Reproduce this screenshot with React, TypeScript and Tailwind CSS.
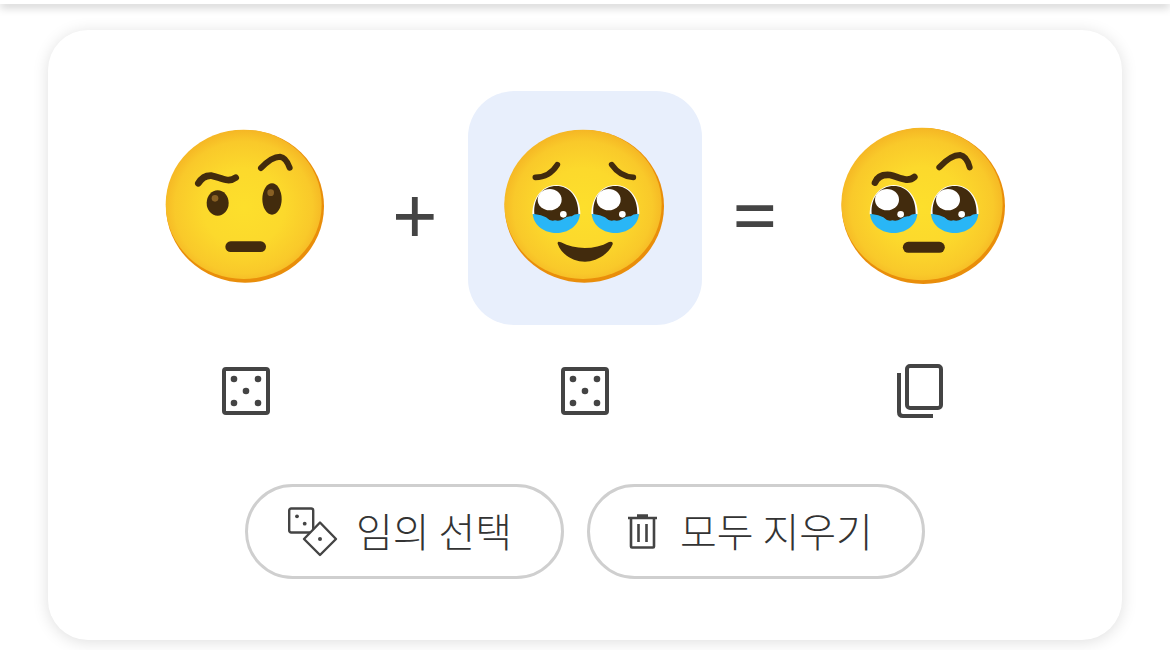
const INK = "#422b0d";

// Cells share one grid so the icon row lines up under the emoji row
function Face({ id, cx, cy, rx, ry, children }: { id: string; cx: number; cy: number; rx: number; ry: number; children: React.ReactNode }) {
  return (
    <svg viewBox="-36 -27 702 702" className="h-[234px] w-[234px]">
      <defs>
        <radialGradient id={id} cx="50%" cy="52%" r="52%">
          <stop offset="0" stopColor="#fddf2c" />
          <stop offset="0.5" stopColor="#fcd92c" />
          <stop offset="0.85" stopColor="#f9c92a" />
          <stop offset="1" stopColor="#f5b624" />
        </radialGradient>
      </defs>
      <ellipse cx={cx} cy={cy} rx={rx} ry={ry} fill="#e98e0a" />
      <ellipse cx={cx - 4} cy={cy - 6} rx={rx - 3} ry={ry - 5} fill={`url(#${id})`} />
      {children}
    </svg>
  );
}

function TearEye({ dx }: { dx: number }) {
  return (
    <g transform={`translate(${dx} 0)`}>
      <path d="M157 343C157 290 190 255 229 255C268 255 301 290 301 343Z" fill="#fff" />
      <path d="M158 342H300C296 380 262 399 229 399C196 399 162 380 158 342Z" fill="#29b6f6" />
      <path
        d="M163 342C160 290 190 258 229 258C268 258 296 290 295 342Q285 341 275 349Q262 347 250 357Q238 365 225 361Q210 365 198 352Q185 345 163 342Z"
        fill={INK}
      />
      <ellipse cx="209" cy="299" rx="36" ry="32" fill="#fff" />
      <circle cx="250" cy="343" r="10" fill="#fff" />
    </g>
  );
}

function RaisedBrowFace() {
  return (
    <Face id="face-a" cx={315} cy={319} rx={237} ry={229}>
      <path d="M175 250Q190 225 215 227C240 232 265 250 287 233" fill="none" stroke={INK} strokeWidth="20" strokeLinecap="round" />
      <path d="M363 204Q395 170 420 170Q438 172 449 203" fill="none" stroke={INK} strokeWidth="18" strokeLinecap="round" />
      <ellipse cx="233" cy="309" rx="33" ry="38" fill={INK} />
      <circle cx="225" cy="295" r="10" fill="#896024" />
      <ellipse cx="396" cy="297" rx="29" ry="47" fill={INK} />
      <circle cx="392" cy="278" r="10" fill="#896024" />
      <path d="M272 440H362" stroke={INK} strokeWidth="32" strokeLinecap="round" />
    </Face>
  );
}

function HoldingTearsFace() {
  return (
    <Face id="face-b" cx={313} cy={319} rx={239} ry={229}>
      <path d="M166 232Q208 232 232 194" fill="none" stroke={INK} strokeWidth="17" strokeLinecap="round" />
      <path d="M395 194Q420 230 460 232" fill="none" stroke={INK} strokeWidth="17" strokeLinecap="round" />
      <TearEye dx={0} />
      <TearEye dx={177} />
      <path d="M233 431Q232 422 243 427C285 450 345 450 387 426Q400 422 398 433C385 465 345 485 315 485C280 485 245 465 233 431Z" fill={INK} />
    </Face>
  );
}

function MixedFace() {
  return (
    <Face id="face-c" cx={310} cy={318} rx={245} ry={234}>
      <TearEye dx={-8} />
      <TearEye dx={175} />
      <path d="M165 248Q175 222 210 225C235 230 262 250 283 231" fill="none" stroke={INK} strokeWidth="20" strokeLinecap="round" />
      <path d="M358 202Q392 165 420 165Q440 168 449 202" fill="none" stroke={INK} strokeWidth="18" strokeLinecap="round" />
      <path d="M265 442H358" stroke={INK} strokeWidth="33" strokeLinecap="round" />
    </Face>
  );
}

function Die({ className }: { className?: string }) {
  return (
    <svg viewBox="0 0 48 48" className={`h-12 w-12 ${className ?? ""}`} fill="#444">
      <rect x="2" y="2" width="44" height="44" rx="2" fill="none" stroke="#444" strokeWidth="4" />
      <circle cx="12" cy="12" r="3.3" />
      <circle cx="36" cy="12" r="3.3" />
      <circle cx="24" cy="24" r="3.3" />
      <circle cx="12" cy="36" r="3.3" />
      <circle cx="36" cy="36" r="3.3" />
    </svg>
  );
}

function CopyIcon() {
  return (
    <svg viewBox="0 0 47 54" className="mr-[10px] h-[54px] w-[47px]" fill="none" stroke="#444" strokeWidth="4">
      <rect x="10" y="2" width="34" height="42" rx="3" />
      <path d="M2 9V48Q2 52 6 52H36" />
    </svg>
  );
}

function DiceIcon() {
  return (
    <svg viewBox="0 0 50 50" className="h-[50px] w-[50px]" fill="#444">
      <rect x="1.2" y="1.5" width="24" height="24" rx="2" fill="none" stroke="#444" strokeWidth="2.4" />
      <circle cx="9" cy="9.3" r="1.9" />
      <circle cx="16.7" cy="16.7" r="1.9" />
      <path d="M32 15.5L48 32L32 48L16 32Z" fill="#fff" stroke="#444" strokeWidth="2.4" strokeLinejoin="round" />
      <circle cx="32" cy="32" r="2" />
    </svg>
  );
}

function TrashIcon() {
  return (
    <svg viewBox="0 0 29 35" className="h-[35px] w-[29px]" fill="none" stroke="#444" strokeWidth="2.6">
      <path d="M0 4H29M9 1.5H20" />
      <path d="M3 4V32.5Q3 33.5 4 33.5H25Q26 33.5 26 32.5V4" />
      <path d="M10.5 10V28M18.5 10V28" />
    </svg>
  );
}

function Operator({ children, className }: { children: string; className: string }) {
  return (
    <div className={`flex h-[234px] w-[106px] items-center justify-center font-['Noto_Sans',sans-serif] text-[80px] leading-none text-[#444] ${className}`}>
      {children}
    </div>
  );
}

function PillButton({ icon, label, className }: { icon: React.ReactNode; label: string; className: string }) {
  return (
    <button className={`flex h-[95px] items-center rounded-full border-[3px] border-[#cfcfcf] bg-white ${className}`}>
      {icon}
      <span className="whitespace-nowrap pb-[3px] font-['Noto_Sans_CJK_KR',sans-serif] text-[40px] font-light leading-none text-[#333]">{label}</span>
    </button>
  );
}

export default function App() {
  return (
    <div className="h-[650px] overflow-hidden bg-white">
      <div className="h-1 bg-white shadow-[0_2px_10px_rgba(0,0,0,0.35)]" />
      <div className="mx-12 mt-[26px] h-[610px] rounded-[40px] bg-white pt-[61px] shadow-[0_2px_16px_rgba(0,0,0,0.13)]">
        <div className="flex justify-center">
          <RaisedBrowFace />
          <Operator className="pt-[12px]">+</Operator>
          <div className="rounded-[46px] bg-[#e8effc]">
            <HoldingTearsFace />
          </div>
          <Operator className="pt-[10px]">=</Operator>
          <MixedFace />
        </div>
        <div className="mt-[39px] flex h-[54px] justify-center">
          <div className="flex w-[234px] items-center justify-center">
            <Die className="ml-[2px]" />
          </div>
          <div className="w-[106px]" />
          <div className="flex w-[234px] items-center justify-center">
            <Die />
          </div>
          <div className="w-[106px]" />
          <div className="flex w-[234px] items-center justify-center">
            <CopyIcon />
          </div>
        </div>
        <div className="mt-[66px] flex justify-center gap-[23px]">
          <PillButton className="w-[319px] gap-[18px] pl-10" icon={<DiceIcon />} label="임의 선택" />
          <PillButton className="w-[338px] gap-[23px] pl-[38px]" icon={<TrashIcon />} label="모두 지우기" />
        </div>
      </div>
    </div>
  );
}
